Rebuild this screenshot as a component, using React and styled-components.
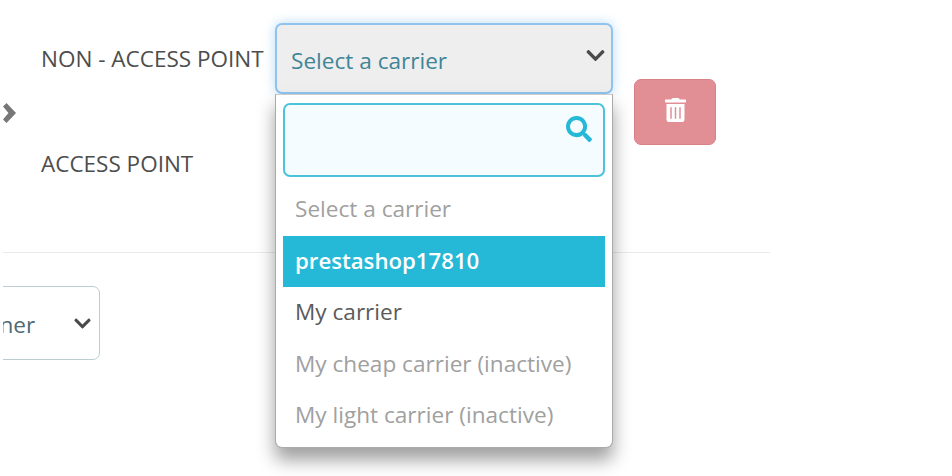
import React from 'react'
import styled, { createGlobalStyle } from 'styled-components'
import { FaChevronDown, FaSearch, FaTrashAlt } from 'react-icons/fa'

const GlobalStyle = createGlobalStyle`
    html, body {
        margin: 0;
        padding: 0;
        background: #fff;
        font-family: "Open Sans", "Liberation Sans", sans-serif;
    }
`

const carriers = [
    { name: 'Select a carrier', kind: 'muted' },
    { name: 'prestashop17810', kind: 'active' },
    { name: 'My carrier', kind: 'normal' },
    { name: 'My cheap carrier (inactive)', kind: 'muted' },
    { name: 'My light carrier (inactive)', kind: 'muted' },
]

function App() {
    return (
        <Page>
            <GlobalStyle />
            <TopSection>
                <ToggleArrow>
                    <svg viewBox="0 0 13 20">
                        <polygon points="0,3.5 3.5,0 13,10 3.5,20 0,16.5 5.5,10" />
                    </svg>
                </ToggleArrow>
                <Labels>
                    <Label>NON - ACCESS POINT</Label>
                    <Label>ACCESS POINT</Label>
                </Labels>
                <SelectWrap>
                    <CarrierSelect>
                        <CarrierValue>Select a carrier</CarrierValue>
                        <CarrierChevron><FaChevronDown /></CarrierChevron>
                    </CarrierSelect>
                    <Dropdown>
                        <SearchBox>
                            <FaSearch />
                        </SearchBox>
                        <Options>
                            {carriers.map(c => (
                                <Option key={c.name} kind={c.kind}>{c.name}</Option>
                            ))}
                        </Options>
                    </Dropdown>
                </SelectWrap>
                <DeleteButton><FaTrashAlt /></DeleteButton>
            </TopSection>
            <BottomSection>
                <RoleSelect>
                    <span>Partner</span>
                    <FaChevronDown />
                </RoleSelect>
            </BottomSection>
        </Page>
    )
}

const Page = styled.div`
    width: 952px;
    height: 476px;
    padding-left: 3px;
    box-sizing: border-box;
    overflow: hidden;
`

const TopSection = styled.div`
    width: 767px;
    height: 253px;
    box-sizing: border-box;
    display: flex;
    align-items: flex-start;
    border-bottom: 1px solid #eaeaea;
`

const ToggleArrow = styled.div`
    width: 38px;
    margin-top: 103px;
    svg {
        display: block;
        width: 13px;
        height: 20px;
        fill: #777;
    }
`

const Labels = styled.div`
    width: 234px;
    padding-top: 43px;
    display: flex;
    flex-direction: column;
    gap: 74px;
`

const Label = styled.div`
    font-size: 22.5px;
    line-height: 31px;
    color: #4d4d4d;
    white-space: nowrap;
`

const SelectWrap = styled.div`
    position: relative;
    width: 338px;
    margin-top: 23px;
`

const CarrierSelect = styled.div`
    height: 71px;
    box-sizing: border-box;
    padding: 0 5px 0 14px;
    display: flex;
    justify-content: space-between;
    background: #eeeeee;
    border: 2px solid #8ec3f0;
    border-radius: 7px;
    box-shadow: 0 0 12px rgba(102, 175, 233, 0.45);
`

const CarrierValue = styled.span`
    margin-top: 20px;
    font-size: 22.6px;
    line-height: 32px;
    color: #3f8598;
`

const CarrierChevron = styled.span`
    margin-top: 20px;
    color: #4a4a4a;
    svg {
        display: block;
        width: 21px;
        height: 21px;
    }
`

const Dropdown = styled.div`
    position: absolute;
    top: 71px;
    left: 0;
    right: 0;
    height: 354px;
    box-sizing: border-box;
    padding: 8px 7px 0;
    background: #fff;
    border: 1px solid #aaa;
    border-top-color: #ccc;
    border-radius: 0 0 7px 7px;
    box-shadow: 0 12px 18px rgba(0, 0, 0, 0.38);
`

const SearchBox = styled.div`
    height: 74px;
    box-sizing: border-box;
    padding: 11px 11px 0 0;
    display: flex;
    justify-content: flex-end;
    background: #f5fcff;
    border: 2px solid #4cc3dc;
    border-radius: 7px;
    color: #25b9d7;
    svg {
        display: block;
        width: 26px;
        height: 26px;
    }
`

const Options = styled.div`
    margin-top: 7px;
    display: flex;
    flex-direction: column;
`

const optionColors = { muted: '#a0a0a0', normal: '#5a5a5a', active: '#fff' }

const Option = styled.div`
    height: 51.5px;
    padding: 0 12px 2px;
    box-sizing: border-box;
    display: flex;
    align-items: center;
    font-size: ${props => props.kind === 'active' ? '22.2px' : '22.6px'};
    font-weight: ${props => props.kind === 'active' ? 600 : 400};
    color: ${props => optionColors[props.kind]};
    background: ${props => props.kind === 'active' ? '#25b9d7' : 'transparent'};
`

const DeleteButton = styled.div`
    width: 82px;
    height: 66px;
    margin: 79px 0 0 21px;
    box-sizing: border-box;
    display: flex;
    justify-content: center;
    padding-top: 18px;
    background: #e18f95;
    border: 1px solid #da8088;
    border-radius: 7px;
    color: #fff;
    svg {
        display: block;
        width: 21px;
        height: 24px;
    }
`

const BottomSection = styled.div`
    padding-top: 33px;
    width: 97px;
    overflow: hidden;
`

const RoleSelect = styled.div`
    width: 197px;
    height: 74px;
    margin-left: -100px;
    box-sizing: border-box;
    padding: 0 7px 0 30px;
    display: flex;
    align-items: center;
    justify-content: space-between;
    border: 1px solid #bbcdd2;
    border-radius: 7px;
    font-size: 22.6px;
    color: #4d6a75;
    span {
        margin: 2px 0 0 22px;
    }
    svg {
        display: block;
        width: 19px;
        height: 19px;
        color: #4a4a4a;
    }
`

export default App
